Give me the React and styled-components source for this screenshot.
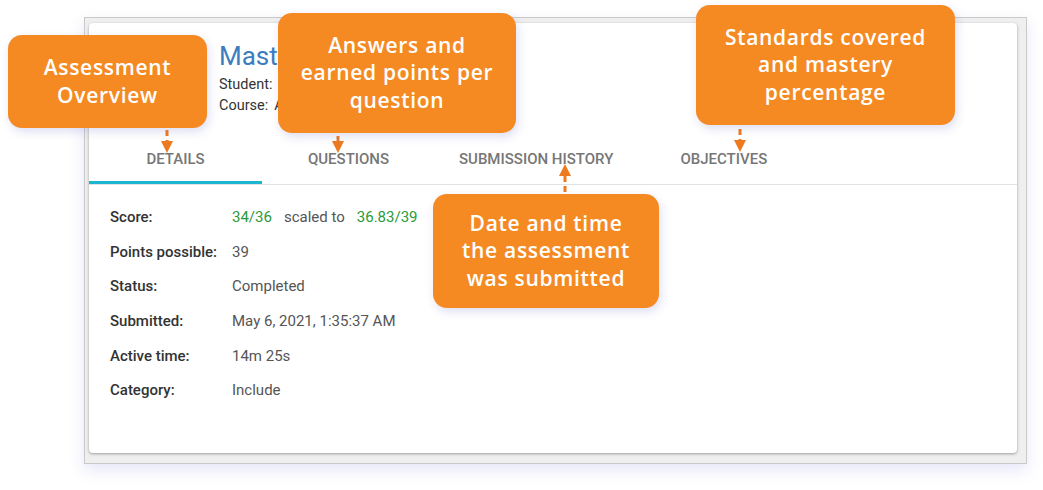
import React from "react";
import styled, { createGlobalStyle } from "styled-components";

const Global = createGlobalStyle`
  html, body { margin: 0; padding: 0; background: #ffffff; }
  body { font-family: Roboto, "Liberation Sans", sans-serif; }
`;

const Page = styled.div`
  position: relative;
  width: 1043px;
  height: 490px;
  padding: 17px 0 0 84px;
  box-sizing: border-box;
`;

const Frame = styled.div`
  width: 943px;
  height: 447px;
  box-sizing: border-box;
  border: 1px solid #c9c9c9;
  background: #efefef;
  padding: 5px 9px 10px 4px;
  box-shadow: 0 6px 14px rgba(140, 140, 230, 0.22);
  display: flex;
`;

const Card = styled.div`
  flex: 1;
  background: #fff;
  border-radius: 4px;
  box-shadow: 0 1px 3px rgba(0, 0, 0, 0.35);
  display: flex;
  flex-direction: column;
`;

const Header = styled.div`
  padding: 15px 0 0 130px;
  height: 113px;
  box-sizing: border-box;
`;

const Title = styled.div`
  font-size: 26px;
  line-height: 36px;
  color: #3b7dc0;
`;

const Meta = styled.div`
  font-size: 14.5px;
  line-height: 21px;
  color: #333;
  span { margin-left: 6px; }
`;

const Tabs = styled.div`
  display: flex;
  height: 48px;
  border-bottom: 1px solid #e2e2e2;
`;

const Tab = styled.div`
  min-width: 173px;
  padding: 0 24px 3px;
  box-sizing: border-box;
  display: flex;
  align-items: center;
  justify-content: center;
  font-size: 15px;
  font-weight: 500;
  color: #767676;
  text-transform: uppercase;
  box-shadow: ${(p) => (p.$active ? "inset 0 -3px 0 #1cb6d2" : "none")};
`;

const Details = styled.div`
  display: grid;
  grid-template-columns: 122px auto;
  grid-auto-rows: 34.7px;
  padding: 22px 0 0 21px;
  align-items: start;
`;

const Label = styled.div`
  font-size: 15px;
  line-height: 20px;
  font-weight: 500;
  color: #333;
`;

const Value = styled.div`
  font-size: 15px;
  line-height: 20px;
  color: #555;
  display: flex;
  gap: 12px;
`;

const Green = styled.span`
  color: #2b9a3a;
`;

const Callout = styled.div`
  position: absolute;
  left: ${(p) => p.$x}px;
  top: ${(p) => p.$y}px;
  width: ${(p) => p.$w}px;
  height: ${(p) => p.$h}px;
  box-sizing: border-box;
  background: #f58a23;
  border-radius: 14px;
  box-shadow: 2px 4px 10px rgba(110, 110, 200, 0.22);
  display: flex;
  align-items: center;
  justify-content: center;
  text-align: center;
  white-space: nowrap;
  color: #fff;
  font-family: "Open Sans", "Noto Sans", sans-serif;
  font-weight: 600;
  font-size: 21px;
  letter-spacing: 0.7px;
  line-height: 27.5px;
  padding: 0 8px;
`;

const ArrowSvg = styled.svg`
  position: absolute;
  left: ${(p) => p.$x - 7}px;
  top: ${(p) => p.$y}px;
  overflow: visible;
`;

function Arrow({ x, y, len, up }) {
  const head = 12;
  return (
    <ArrowSvg $x={x} $y={y} width="14" height={len}>
      {up ? (
        <>
          <polygon points={`1,${head} 13,${head} 7,0`} fill="#ee7a1f" />
          <line x1="7" y1={head} x2="7" y2={len} stroke="#ee7a1f" strokeWidth="3" strokeDasharray="6 4" />
        </>
      ) : (
        <>
          <line x1="7" y1="0" x2="7" y2={len - head} stroke="#ee7a1f" strokeWidth="3" strokeDasharray="6 4" />
          <polygon points={`1,${len - head} 13,${len - head} 7,${len}`} fill="#ee7a1f" />
        </>
      )}
    </ArrowSvg>
  );
}

const rows = [
  ["Score:", null],
  ["Points possible:", "39"],
  ["Status:", "Completed"],
  ["Submitted:", "May 6, 2021, 1:35:37 AM"],
  ["Active time:", "14m 25s"],
  ["Category:", "Include"],
];

function Lines({ items }) {
  return items.map((t, i) => (
    <React.Fragment key={i}>
      {i > 0 && <br />}
      {t}
    </React.Fragment>
  ));
}

export default function App() {
  return (
    <>
      <Global />
      <Page>
        <Frame>
          <Card>
            <Header>
              <Title>Mastery Check 1</Title>
              <Meta>Student:<span>Jordan Lee</span></Meta>
              <Meta>Course:<span>Algebra 1</span></Meta>
            </Header>
            <Tabs>
              <Tab $active>Details</Tab>
              <Tab>Questions</Tab>
              <Tab>Submission History</Tab>
              <Tab>Objectives</Tab>
            </Tabs>
            <Details>
              {rows.map(([l, v]) => (
                <React.Fragment key={l}>
                  <Label>{l}</Label>
                  {v === null ? (
                    <Value>
                      <Green>34/36</Green>
                      <span>scaled to</span>
                      <Green>36.83/39</Green>
                    </Value>
                  ) : (
                    <Value>{v}</Value>
                  )}
                </React.Fragment>
              ))}
            </Details>
          </Card>
        </Frame>

        <Arrow x={167} y={130} len={23} />
        <Arrow x={338} y={136} len={17} />
        <Arrow x={740} y={129} len={23} />
        <Arrow x={565} y={164} len={30} up />

        <Callout $x={8} $y={35} $w={199} $h={93}>
          <div><Lines items={["Assessment", "Overview"]} /></div>
        </Callout>
        <Callout $x={278} $y={13} $w={238} $h={120}>
          <div><Lines items={["Answers and", "earned points per", "question"]} /></div>
        </Callout>
        <Callout $x={696} $y={5} $w={259} $h={120}>
          <div><Lines items={["Standards covered", "and mastery", "percentage"]} /></div>
        </Callout>
        <Callout $x={433} $y={194} $w={226} $h={114}>
          <div><Lines items={["Date and time", "the assessment", "was submitted"]} /></div>
        </Callout>
      </Page>
    </>
  );
}
